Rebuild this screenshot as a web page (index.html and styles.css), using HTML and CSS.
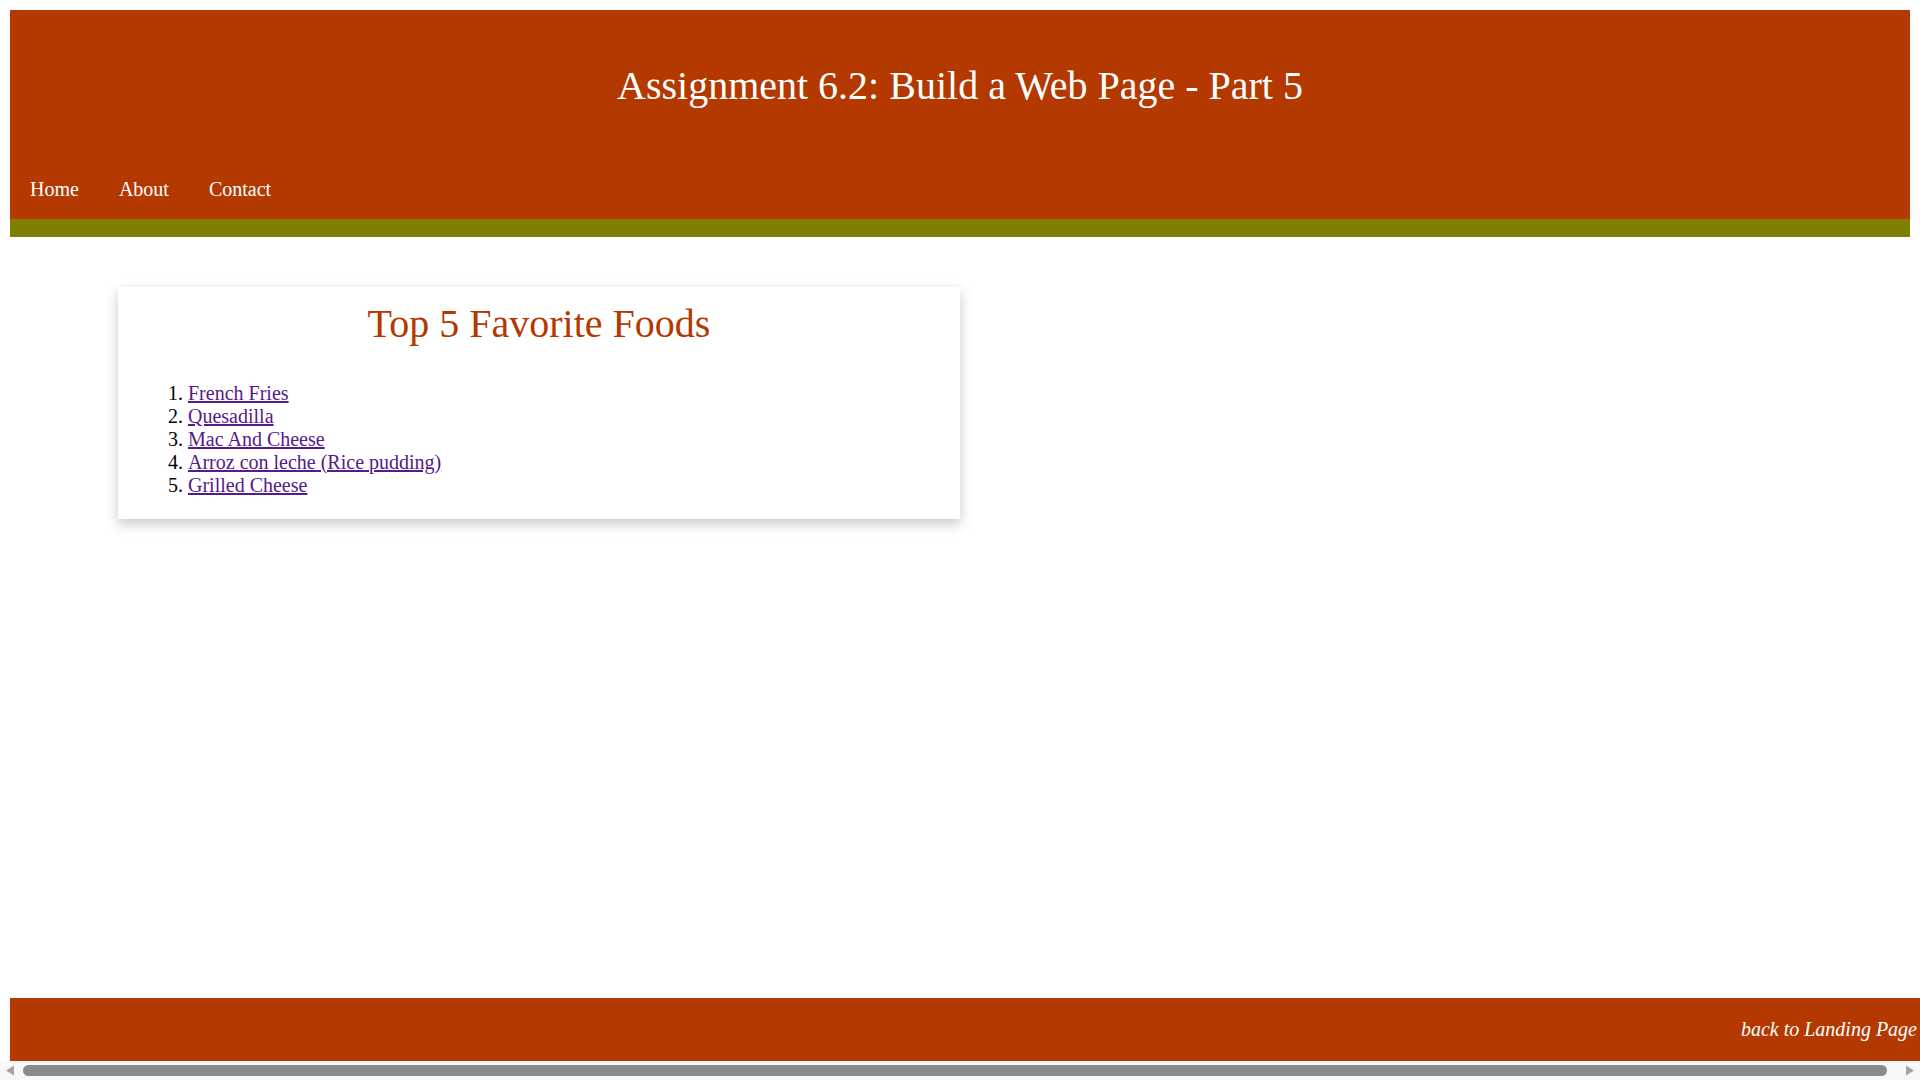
FILE: index.html
```html
<!DOCTYPE html>
<html lang="en">
<head>
<meta charset="utf-8">
<title>Assignment 6.2: Build a Web Page - Part 5</title>
<link rel="stylesheet" href="styles.css">
</head>
<body>
<div class="page">
  <header class="site-header">
    <h1 class="site-title">Assignment 6.2: Build a Web Page - Part 5</h1>
    <nav class="site-nav">
      <a href="#" class="nav-link">Home</a>
      <a href="#" class="nav-link">About</a>
      <a href="#" class="nav-link">Contact</a>
    </nav>
  </header>
  <main class="content">
    <section class="card">
      <h2 class="card-title">Top 5 Favorite Foods</h2>
      <ol class="food-list">
        <li><a href="#" class="food-link">French Fries</a></li>
        <li><a href="#" class="food-link">Quesadilla</a></li>
        <li><a href="#" class="food-link">Mac And Cheese</a></li>
        <li><a href="#" class="food-link">Arroz con leche (Rice pudding)</a></li>
        <li><a href="#" class="food-link">Grilled Cheese</a></li>
      </ol>
    </section>
  </main>
  <footer class="site-footer">
    <a href="#" class="footer-link">back to Landing Page</a>
  </footer>
</div>
<div class="hscroll" aria-hidden="true">
  <svg class="hscroll-arrow" width="10" height="19" viewBox="0 0 10 19"><path d="M9 4.5 L1 9.5 L9 14.5 Z" fill="#a3a3a3"/></svg>
  <div class="hscroll-thumb"></div>
  <svg class="hscroll-arrow" width="10" height="19" viewBox="0 0 10 19"><path d="M1 4.5 L9 9.5 L1 14.5 Z" fill="#a3a3a3"/></svg>
</div>
</body>
</html>
```
FILE: styles.css
```css
html, body {
  margin: 0;
  padding: 0;
}
body {
  font-family: "Liberation Serif", "Times New Roman", serif;
  font-size: 20px;
  line-height: 23px;
  color: #000;
  background: #fff;
  min-height: 100vh;
  display: flex;
  flex-direction: column;
}
.page {
  flex: 1;
  display: flex;
  flex-direction: column;
  padding: 10px 0 0 10px;
}
.site-header {
  margin-right: 10px;
  background: #b33900;
  border-bottom: 18px solid #808000;
  padding: 53px 0 18px;
}
.site-title {
  margin: 0;
  font-size: 40px;
  line-height: 46px;
  font-weight: normal;
  color: #fff;
  text-align: center;
}
.site-nav {
  display: flex;
  margin-top: 69px;
}
.nav-link {
  color: #fff;
  text-decoration: none;
  padding: 0 20px;
}
.content {
  flex: 1;
  padding: 50px 0 0 108px;
}
.card {
  width: 802px;
  padding: 14px 20px 0;
  background: #fff;
  box-shadow: 0 5px 12px rgba(0, 0, 0, 0.22);
  overflow: hidden;
}
.card-title {
  margin: 0;
  font-size: 40px;
  line-height: 46px;
  font-weight: normal;
  color: #b33900;
  text-align: center;
}
.food-list {
  margin: 35px 0 22px;
  padding-left: 50px;
}
.food-link {
  color: #551a8b;
}
.site-footer {
  background: #b33900;
  padding: 20px 3px 20px 20px;
  text-align: right;
}
.footer-link {
  color: #fff;
  font-style: italic;
  text-decoration: none;
}
.hscroll {
  display: flex;
  align-items: center;
  height: 19px;
  padding: 0 5px;
  background: #f8f8f8;
}
.hscroll-arrow {
  flex: none;
  display: block;
}
.hscroll-thumb {
  flex: 1;
  height: 11px;
  margin: 0 18px 0 8px;
  border-radius: 6px;
  background: #8b8b8b;
}
```
